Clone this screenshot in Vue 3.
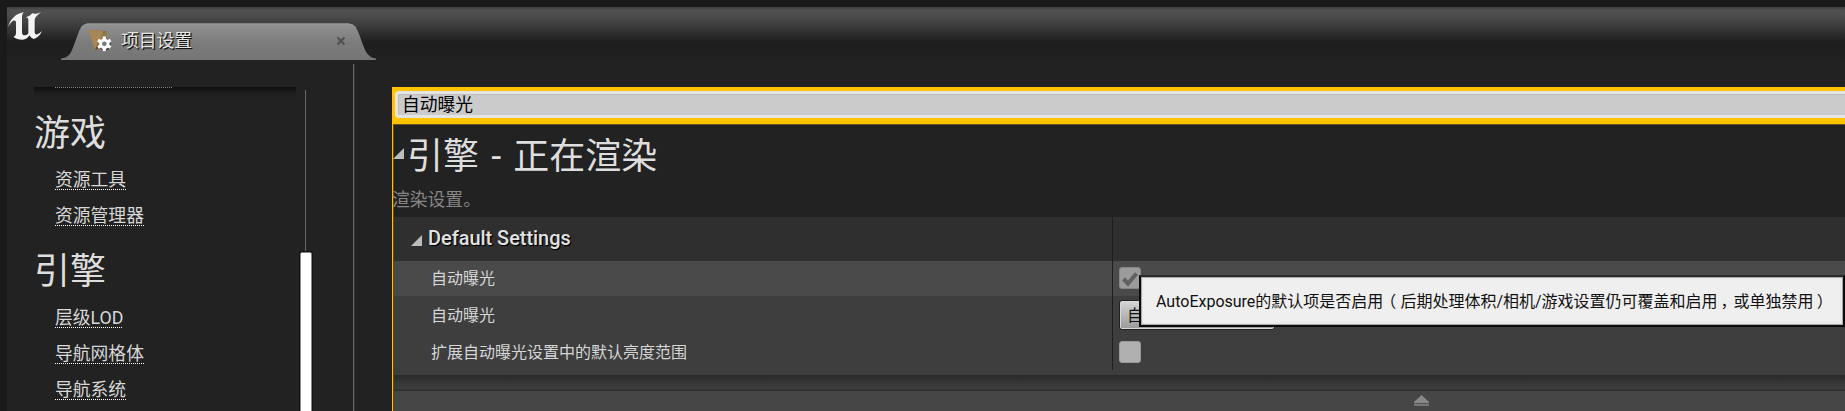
<script setup>
const groups = [
  { title: '游戏', links: ['资源工具', '资源管理器'] },
  { title: '引擎', links: ['层级LOD', '导航网格体', '导航系统'] },
]
const rows = [
  { label: '自动曝光', kind: 'check', checked: true },
  { label: '自动曝光', kind: 'combo', value: '自' },
  { label: '扩展自动曝光设置中的默认亮度范围', kind: 'check', checked: false },
]
</script>

<template>
  <div class="window">
    <header class="titlebar">
      <svg class="logo" viewBox="21 30 108 96" width="36" height="32">
        <path fill="#f4f4f4" d="M24 82C30 58 46 42 71 36C66 42 66 48 66 56V96C66 103 69 106 74 106C80 106 85 102 85 99V60C85 54 82 52 77 52C86 50 92 46 97 40C105 43 114 41 123 36C112 46 104 52 104 62V95C104 102 107 104 112 103C117 101 121 97 126 92C121 106 111 114 101 117C95 115 91 111 89 106C83 114 76 119 68 119C56 119 46 116 40 110C46 108 48 104 48 98V68C48 62 45 60 39 62C33 66 28 73 24 82Z" />
      </svg>
      <div class="tab">
        <svg class="tab-shape" viewBox="0 0 316 37" width="316" height="37">
          <defs>
            <linearGradient id="tabFill" x1="0" y1="0" x2="0" y2="1">
              <stop offset="0" stop-color="#929292" />
              <stop offset=".5" stop-color="#7d7d7d" />
              <stop offset="1" stop-color="#757575" />
            </linearGradient>
          </defs>
          <path fill="url(#tabFill)" d="M0 37V35.5C8 35 10 30 13 22L17 11C20 3 22 .5 29 .5H285C292 .5 295 3 298 11L302 22C305 30 308 35 315 35.5V37Z" />
          <path fill="none" stroke="#9b9b9b" d="M20 5C22 2 24 1 29 1H285C291 1 293 2 295 5" />
        </svg>
        <div class="tab-content">
          <svg class="tab-icon" viewBox="0 0 26 26" width="26" height="26">
            <path fill="#8f7048" d="M1 2L20 3V20L8 22Z" />
            <path fill="#a98656" d="M1 2L16 3L14 13L8 22Z" />
            <path fill="#87823f" d="M14 7L20 4V10Z" />
            <path fill="#5c4a30" d="M8 22L11 15L13 20Z" />
            <g transform="translate(17.3 15.8)">
              <g fill="#444" transform="translate(.8 1)"><circle r="6" /></g>
              <g fill="#fff">
                <circle r="5.2" />
                <rect v-for="a in 6" :key="a" x="-1.6" y="-7.3" width="3.2" height="4" :transform="`rotate(${a * 60})`" />
              </g>
              <circle r="2.3" fill="#777" />
            </g>
          </svg>
          <span class="tab-title">项目设置</span>
          <svg class="close" viewBox="0 0 10 10" width="10" height="10">
            <path d="M1.5 1.5L8.5 8.5M8.5 1.5L1.5 8.5" stroke="#505050" stroke-width="2" />
          </svg>
        </div>
      </div>
    </header>

    <div class="body">
      <nav class="sidebar">
        <div class="cut"><span class="cut-line"></span></div>
        <section v-for="g in groups" :key="g.title" class="group">
          <h2>{{ g.title }}</h2>
          <div v-for="l in g.links" :key="l" class="link-row"><a>{{ l }}</a></div>
        </section>
      </nav>
      <div class="scroll"><div class="thumb"></div></div>
      <div class="splitter"></div>

      <main class="panel">
        <div class="search"><div class="search-field">自动曝光</div></div>
        <div class="details">
          <div class="heading">
            <svg class="arrow" viewBox="0 0 11 11" width="11" height="11"><path d="M11 0V11H0Z" fill="#bdbdbd" /></svg>
            <h1>引擎 - 正在渲染</h1>
          </div>
          <p class="desc">渲染设置。</p>
          <div class="category">
            <div class="cat-name">
              <svg class="arrow" viewBox="0 0 11 11" width="11" height="11"><path d="M11 0V11H0Z" fill="#bdbdbd" /></svg>
              <span>Default Settings</span>
            </div>
            <div class="cell"></div>
          </div>
          <div v-for="(r, i) in rows" :key="i" class="row" :class="'row' + i">
            <div class="name">{{ r.label }}</div>
            <div class="cell">
              <div v-if="r.kind === 'check'" class="check" :class="{ on: r.checked }">
                <svg v-if="r.checked" viewBox="0 0 22 22" width="22" height="22"><path d="M4.5 12L9 16.5L17.5 6.5" fill="none" stroke="#606060" stroke-width="4" /></svg>
              </div>
              <div v-else class="combo">{{ r.value }}</div>
            </div>
          </div>
          <div class="foot-shadow"></div>
          <div class="expander">
            <svg viewBox="0 0 15 11" width="15" height="11">
              <path d="M7.5 0L15 7H0Z" fill="#888" /><path d="M0 7.5H15M0 10H15" stroke="#888" stroke-width="1.3" />
            </svg>
          </div>
        </div>
      </main>
    </div>

    <div class="tooltip">AutoExposure的默认项是否启用<span class="open">（</span>后期处理体积/相机/游戏设置仍可覆盖和启用<span class="comma">，</span>或单独禁用<span class="shut">）</span></div>
  </div>
</template>

<style>
body { background: #1b1b1b; overflow: hidden; }
</style>

<style scoped>
* { box-sizing: border-box; }
.window {
  position: relative; width: 1845px; height: 411px; overflow: hidden;
  padding: 7px 0 0 7px; background: #1a1a1a; color: #dcdcdc;
  font-family: Roboto, "Noto Sans CJK SC", sans-serif;
}
.titlebar {
  height: 53px; display: flex; align-items: flex-end;
  background: linear-gradient(#3f3f3f 0, #505050 3px, #4e4e4e 8px, #3d3d3d 18px, #292929 29px, #1f1f1f 35px, #202020 100%);
}
.logo { align-self: flex-start; margin-top: 3px; }
.tab { position: relative; width: 316px; height: 37px; margin-left: 18px; }
.tab-shape { position: absolute; inset: 0; }
.tab-content { position: relative; display: flex; align-items: center; height: 36px; padding: 0 31px 0 26px; }
.tab-title { margin-left: 8px; flex: 1; font-size: 17.8px; line-height: 24px; color: #e6e6e6; text-shadow: 1px 1px 1px #111, 1px 1px 0 #222; }
.body { display: flex; height: 351px; background: #222; }
.sidebar { width: 262px; margin: 27px 0 0 27px; overflow: hidden; }
.cut {
  height: 13px; padding-left: 21px;
  background: linear-gradient(#0d0d0d, #171717 3px, #1f1f1f 7px, #222 12px);
}
.cut-line { display: block; width: 117px; height: 1px; background: repeating-linear-gradient(90deg, #888 0 1px, #111 1px 2px); }
.group { height: 138px; padding-top: 8px; }
h2, h1 { margin: 0; font-weight: 400; font-size: 36px; line-height: 52px; color: #dedede; }
.link-row { height: 36px; padding: 7px 0 0 21px; }
.group h2 + .link-row { margin-top: 1px; }
a {
  display: inline-block; height: 22px; font-size: 17.8px; line-height: 23px; color: #d8d8d8; padding-bottom: 1px;
  background: repeating-linear-gradient(90deg, #fff 0 1px, #222 1px 2px) left bottom / 100% 1px no-repeat;
}
.scroll { width: 12px; margin: 30px 0 0 4px; padding-top: 162px; background: linear-gradient(#666, #666) 5px 0 / 1px 100% no-repeat; }
.thumb { height: 170px; background: #fff; border: 1px solid #888; border-radius: 2px; box-shadow: 0 0 0 1px #111; }
.splitter { width: 2px; margin: 4px 0 0 41px; background: linear-gradient(90deg, #666 50%, #383838 50%); }
.panel { flex: 1; margin: 27px 0 0 37px; border-left: 1px solid #ffc400; min-width: 0; }
.search { height: 38px; padding: 4px 0 7px 2px; background: #ffc400; border-bottom: 1px solid #665019; }
.search-field {
  height: 27px; border: 3px solid #e4e4e4; border-right: 0; border-radius: 4px 0 0 4px;
  background: #cbcbcb; box-shadow: inset 1px 1px 1px #bdbdbd; padding-left: 4px;
  color: #000; font-size: 17.8px; line-height: 21px;
}
.details { border-left: 1px solid #5b4a1b; }
.heading { display: flex; align-items: center; height: 60px; }
.heading h1 { margin-left: 3px; padding-top: 3px; white-space: pre; word-spacing: 3.2px; }
.heading .arrow { margin: -3px 0 0 -1px; }
.desc { margin: 0; height: 32px; line-height: 30px; font-size: 17.8px; color: #868686; margin-left: -2px; }
.category { display: flex; height: 44px; background: #2f2f2f; }
.cat-name { width: 718px; display: flex; align-items: center; padding-left: 17px; font-size: 19.9px; font-weight: 500; color: #e2e2e2; text-shadow: 1px 1px 1px #000, 1px 1px 0 #000; }
.cat-name span { margin: -2px 0 0 6px; }
.cat-name .arrow { margin-top: 3px; }
.cell { flex: 1; border-left: 1px solid #1d1d1d; padding-left: 6px; display: flex; align-items: center; }
.row { display: flex; background: #3e3e3e; height: 37px; }
.name { width: 718px; padding-left: 37px; font-size: 16px; line-height: 36px; color: #d6d6d6; }
.row0 { height: 35px; background: #4a4a4a; }
.row1 .name { line-height: 39px; }
.row2 { height: 42px; border-bottom: 5px solid #3e3e3e; }
.row2 .name { line-height: 39px; }
.check { width: 22px; height: 22px; border-radius: 3px; background: #b0b0b0; border: 1px solid #999; }
.check.on { background: #9b9b9b; border-color: #858585; }
.check svg { display: block; margin: -1px; }
.row0 .check { margin-top: -1px; }
.combo {
  width: 156px; height: 30px; padding-left: 7px; border: 1px solid #222; border-radius: 3px;
  box-shadow: inset 0 0 0 1px #d8d8d8; background: linear-gradient(#d5d5d5, #999); color: #111;
  font-size: 16px; line-height: 29px;
}
.foot-shadow { height: 16px; background: linear-gradient(#292929, #303030 4px, #393939 9px, #3c3c3c 14px, #303030 15px); }
.expander { height: 20px; background: #464646; padding: 4px 0 0 1020px; }
.expander svg { display: block; }
.tooltip {
  position: absolute; left: 1139px; top: 275px; width: 706px; height: 52px;
  border: 2px solid #0a0a0a; border-top-color: #2a2a2a; background: #efefef;
  box-shadow: inset 0 0 0 1px #aaa, inset 0 0 3px #bbb;
  padding-left: 15px; line-height: 49px; font-size: 16px; color: #111; white-space: nowrap;
}
.open { margin: 0 4px 0 -3px; }
.comma { margin: 0 -3px 0 3px; }
.shut { margin-left: 3px; }
</style>
